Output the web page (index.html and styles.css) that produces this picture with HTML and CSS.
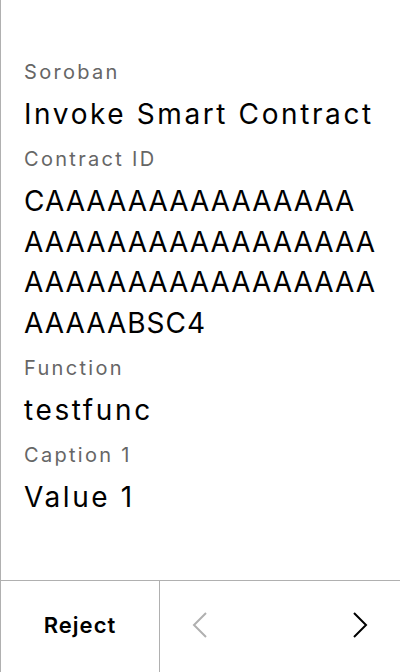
FILE: index.html
```html
<!DOCTYPE html>
<html>
<head>
<meta charset="utf-8">
<link rel="stylesheet" href="styles.css">
</head>
<body>
<div class="screen">
  <div class="content">
    <div class="field">
      <div class="label">Soroban</div>
      <div class="value">Invoke Smart Contract</div>
    </div>
    <div class="field">
      <div class="label">Contract ID</div>
      <div class="value address">CAAAAAAAAAAAAAAA<br>AAAAAAAAAAAAAAAAA<br>AAAAAAAAAAAAAAAAA<br>AAAAABSC4</div>
    </div>
    <div class="field">
      <div class="label">Function</div>
      <div class="value">testfunc</div>
    </div>
    <div class="field">
      <div class="label">Caption 1</div>
      <div class="value">Value 1</div>
    </div>
  </div>
  <div class="footer">
    <button class="reject">Reject</button>
    <div class="nav">
      <button class="nav-btn disabled" aria-label="Previous">
        <svg width="16" height="26" viewBox="0 0 16 26"><polyline points="14,1 2,13 14,25" fill="none" stroke="currentColor" stroke-width="2"/></svg>
      </button>
      <button class="nav-btn" aria-label="Next">
        <svg width="16" height="26" viewBox="0 0 16 26"><polyline points="2,1 14,13 2,25" fill="none" stroke="currentColor" stroke-width="2"/></svg>
      </button>
    </div>
  </div>
</div>
</body>
</html>
```
FILE: styles.css
```css
* { box-sizing: border-box; }
html, body { margin: 0; padding: 0; background: #fff; }
body {
  font-family: Inter, "Noto Sans", sans-serif;
  color: #000;
}
.screen {
  width: 400px;
  height: 672px;
  border-left: 1px solid #b0b0b0;
  display: flex;
  flex-direction: column;
  overflow: hidden;
}
.content {
  flex: 1;
  padding: 58px 23px 0 23px;
  display: flex;
  flex-direction: column;
  gap: 11px;
}
.field {
  display: flex;
  flex-direction: column;
  gap: 8px;
}
.label {
  font-size: 20px;
  line-height: 28px;
  letter-spacing: 2.3px;
  color: #666;
}
.value {
  font-size: 28px;
  line-height: 40px;
  letter-spacing: 2.6px;
  color: #000;
}
.address {
  white-space: nowrap;
  letter-spacing: 1px;
  line-height: 40.5px;
}
.footer {
  height: 92px;
  border-top: 1px solid #b0b0b0;
  padding-bottom: 3px;
  display: flex;
}
button {
  background: none;
  border: 0;
  padding: 0;
  margin: 0;
  font-family: inherit;
  cursor: pointer;
}
.reject {
  width: 159px;
  border-right: 1px solid #b0b0b0;
  margin-bottom: -3px;
  padding-bottom: 3px;
  font-size: 22px;
  font-weight: 600;
  letter-spacing: 1px;
  color: #000;
}
.nav {
  flex: 1;
  display: flex;
  justify-content: space-between;
}
.nav-btn {
  width: 80px;
  display: flex;
  align-items: center;
  justify-content: center;
  color: #000;
}
.nav-btn.disabled { color: #b0b0b0; }
```
